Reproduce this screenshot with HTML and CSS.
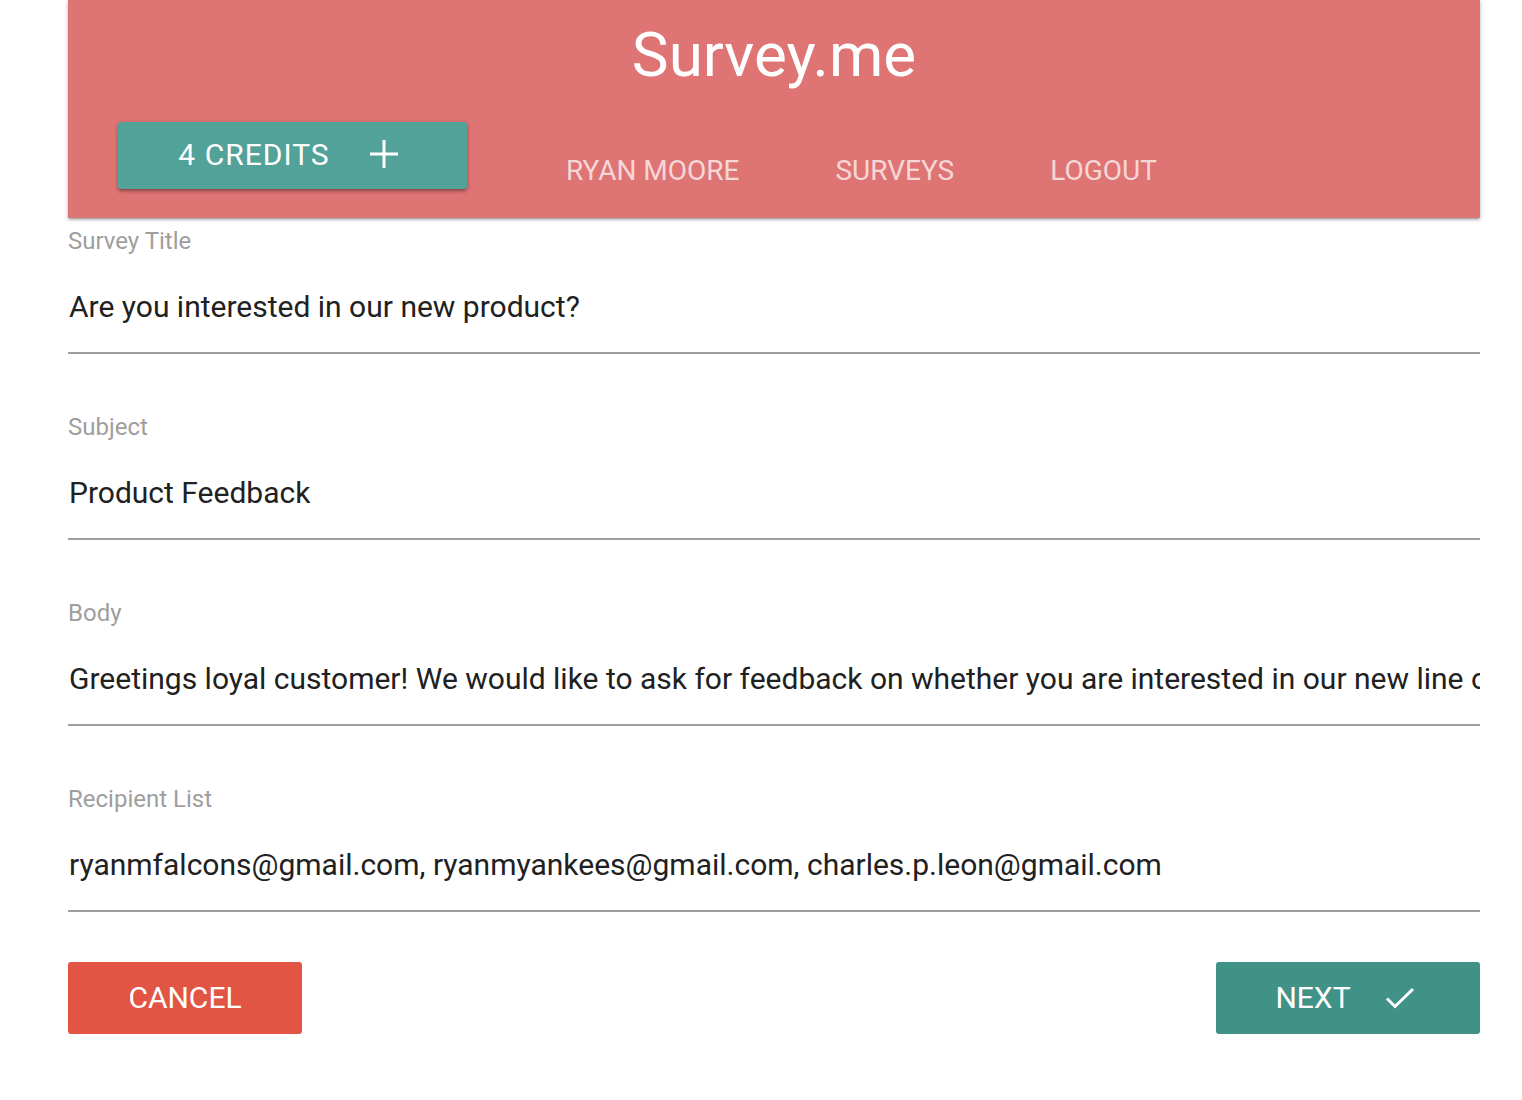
FILE: index.html
```html
<!DOCTYPE html>
<html lang="en">
<head>
<meta charset="utf-8">
<title>Survey.me</title>
<link rel="stylesheet" href="styles.css">
</head>
<body>
<div class="container">
  <nav class="nav">
    <div class="brand">Survey.me</div>
    <div class="nav-row">
      <button class="credits">4 CREDITS
        <svg class="plus" width="28" height="28" viewBox="0 0 28 28"><path d="M14 0V28M0 14H28" stroke="#fff" stroke-width="3" fill="none"/></svg>
      </button>
      <ul class="links">
        <li>RYAN MOORE</li>
        <li>SURVEYS</li>
        <li>LOGOUT</li>
      </ul>
    </div>
  </nav>
  <form class="form">
    <div class="field">
      <label class="label">Survey Title</label>
      <div class="value">Are you interested in our new product?</div>
    </div>
    <div class="field">
      <label class="label">Subject</label>
      <div class="value">Product Feedback</div>
    </div>
    <div class="field">
      <label class="label">Body</label>
      <div class="value">Greetings loyal customer! We would like to ask for feedback on whether you are interested in our new line of products.</div>
    </div>
    <div class="field">
      <label class="label">Recipient List</label>
      <div class="value">ryanmfalcons@gmail.com, ryanmyankees@gmail.com, charles.p.leon@gmail.com</div>
    </div>
    <div class="actions">
      <button type="button" class="btn cancel">CANCEL</button>
      <button type="button" class="btn next">NEXT
        <svg class="check" width="30" height="24" viewBox="0 0 30 24"><path d="M2 12.5L10 20.5L28 3" stroke="#fff" stroke-width="3" fill="none"/></svg>
      </button>
    </div>
  </form>
</div>
</body>
</html>
```
FILE: styles.css
```css
* { box-sizing: border-box; }
body {
  margin: 0;
  background: #fff;
  font-family: Roboto, "Liberation Sans", sans-serif;
}
.container {
  margin-left: 68px;
  width: 1412px;
}
.nav {
  height: 218px;
  background: #df7474;
  box-shadow: 0 2px 2px 0 rgba(0,0,0,0.14), 0 3px 1px -2px rgba(0,0,0,0.12), 0 1px 5px 0 rgba(0,0,0,0.2);
  position: relative;
  z-index: 1;
  padding-top: 15px;
}
.brand {
  text-align: center;
  color: #fff;
  font-size: 62px;
  line-height: 80px;
  height: 107px;
}
.nav-row {
  display: flex;
  align-items: flex-start;
  padding-left: 50px;
}
.credits {
  display: flex;
  align-items: center;
  justify-content: center;
  gap: 40px;
  width: 349px;
  height: 67px;
  border: 0;
  border-radius: 3px;
  background: #52a29a;
  color: #fff;
  font-family: Roboto, "Liberation Sans", sans-serif;
  font-size: 30px;
  letter-spacing: 1px;
  padding: 0 9px 3px 0;
  box-shadow: 0 3px 3px 0 rgba(0,0,0,0.16), 0 3px 1px -2px rgba(0,0,0,0.12), 0 1px 5px 0 rgba(0,0,0,0.22);
}
.plus { display: block; }
.links {
  display: flex;
  gap: 96px;
  list-style: none;
  margin: 0 0 0 99px;
  padding: 0;
}
.links li {
  color: rgba(255,255,255,0.72);
  font-size: 28px;
  line-height: 32px;
  padding-top: 33px;
}
.form {
  padding-top: 8px;
}
.field {
  margin-bottom: 59px;
}
.label {
  display: block;
  color: #9e9e9e;
  font-size: 24px;
  line-height: 30px;
}
.value {
  color: #212121;
  font-size: 30px;
  line-height: 36px;
  padding: 33px 0 27px 1px;
  border-bottom: 2px solid #9e9e9e;
  white-space: nowrap;
  overflow: hidden;
}
.field + .field .label {
  margin-top: -1px;
}
.actions {
  display: flex;
  justify-content: space-between;
  margin-top: -9px;
}
.btn {
  height: 72px;
  border: 0;
  border-radius: 3px;
  color: #fff;
  font-family: Roboto, "Liberation Sans", sans-serif;
  font-size: 30px;
  display: flex;
  align-items: center;
  justify-content: center;
  padding-bottom: 2px;
}
.cancel {
  width: 234px;
  background: #e25443;
}
.next {
  width: 264px;
  background: #409287;
  gap: 34px;
  padding-right: 12px;
}
.check { display: block; }
```
